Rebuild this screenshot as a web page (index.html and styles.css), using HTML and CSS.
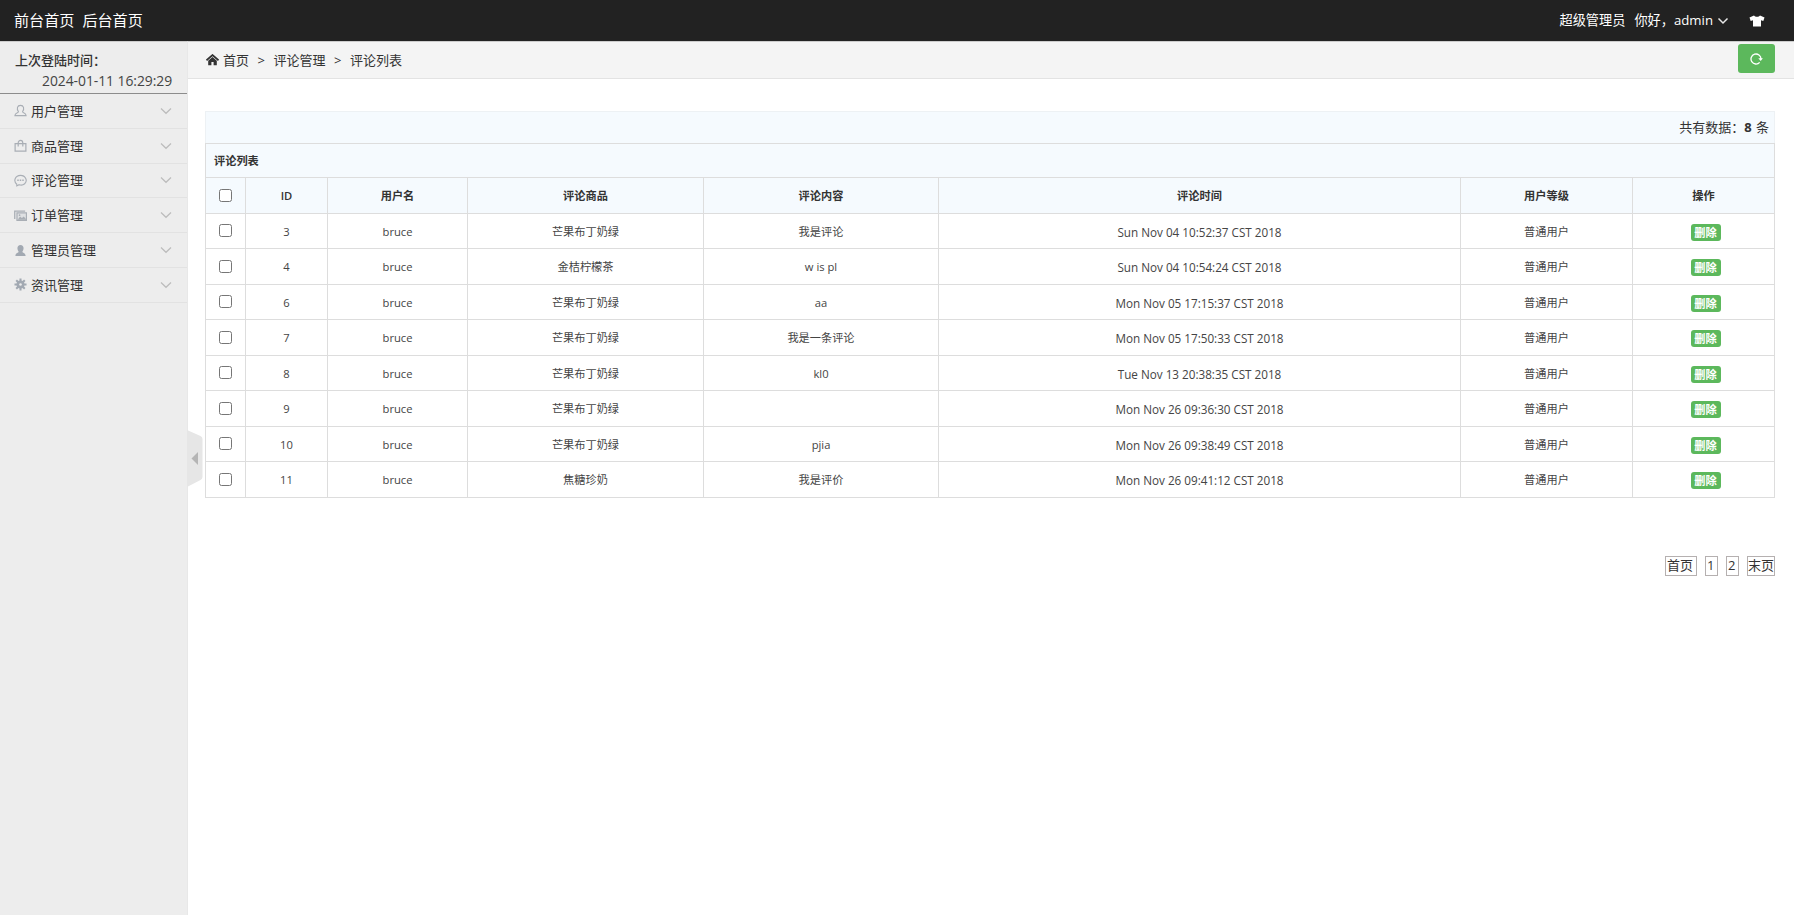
FILE: index.html
```html
<!DOCTYPE html>
<html lang="zh-CN">
<head>
<meta charset="utf-8">
<title>评论列表</title>
<link rel="stylesheet" href="styles.css">
</head>
<body>
<header class="topbar">
  <nav class="topbar-nav"><a>前台首页</a><a>后台首页</a></nav>
  <div class="topbar-user">
    <span class="role">超级管理员</span>
    <span class="hello">你好，admin</span>
    <svg class="caret" width="12" height="8" viewBox="0 0 12 8"><path d="M1.5 1.5 6 6l4.500-4.500" fill="none" stroke="#e8e8e8" stroke-width="1.500"/></svg>
    <svg class="shirt" width="16" height="12" viewBox="0 0 16 12"><path d="M5 .5C6 2.300 10 2.300 11 .5L15.500 2.500 14.300 6 12 5.300V11.500H4V5.300L1.700 6 .5 2.500Z" fill="#fff"/></svg>
  </div>
</header>
<div class="layout">
  <aside class="sidebar">
    <div class="login"><b>上次登陆时间：</b><span>2024-01-11 16:29:29</span></div>
    <ul class="menu">
      <li><svg class="mi" viewBox="0 0 14 14"><path d="M4.800 8.300C2.500 5 3.600 1.500 7 1.500s4.500 3.500 2.200 6.800c0 1.200 3.800 1 3.800 4.200H1c0-3.200 3.800-3 3.800-4.200Z" fill="none" stroke="#a9aeb5" stroke-width="1.200"/></svg><span>用户管理</span><svg class="chev" viewBox="0 0 12 8"><path d="M1 1.500 6 6.300l5-4.800"/></svg></li>
      <li><svg class="mi" viewBox="0 0 14 14"><path d="M1.200 5h11.600v8H1.200ZM4.500 8V4.500C4.500.500 9.500.500 9.500 4.500V8" fill="none" stroke="#a9aeb5" stroke-width="1.300"/></svg><span>商品管理</span><svg class="chev" viewBox="0 0 12 8"><path d="M1 1.500 6 6.300l5-4.800"/></svg></li>
      <li><svg class="mi" viewBox="0 0 14 14"><path d="M3 11C-1.200 7.500 1.500 1.500 7 1.500s8 5.800 4.500 9C9.800 12 7.500 12.200 5.500 11.500L3 12.800Z" fill="none" stroke="#a9aeb5" stroke-width="1.200"/><path d="M3.500 6h1.600v1.600H3.500ZM6.200 6h1.600v1.600H6.200ZM8.900 6h1.600v1.600H8.900Z" fill="#a9aeb5"/></svg><span>评论管理</span><svg class="chev" viewBox="0 0 12 8"><path d="M1 1.500 6 6.300l5-4.800"/></svg></li>
      <li><svg class="mi" viewBox="0 0 14 14"><path d="M.8 10.800V2.200H12" fill="none" stroke="#a9aeb5" stroke-width="1.400"/><path d="M3.200 4.200h10.200v8H3.200Z" fill="#dfe1e3" stroke="#a9aeb5" stroke-width="1.300"/><path d="M4 11.600 6.500 8l2 1.800L10.500 8l3 3.600Z" fill="#a9aeb5"/><circle cx="6" cy="6.600" r=".9" fill="#a9aeb5"/></svg><span>订单管理</span><svg class="chev" viewBox="0 0 12 8"><path d="M1 1.500 6 6.300l5-4.800"/></svg></li>
      <li><svg class="mi" viewBox="0 0 14 14"><path d="M5 8.300C2.600 5 3.600 1 7 1s4.400 4 2 7.300c0 1.200 3.500 1 3.500 4.700h-11C1.500 9.300 5 9.500 5 8.300Z" fill="#a2a9b2"/></svg><span>管理员管理</span><svg class="chev" viewBox="0 0 12 8"><path d="M1 1.500 6 6.300l5-4.800"/></svg></li>
      <li><svg class="mi" viewBox="0 0 14 14"><path d="M7 .5v13M.5 7h13M2.400 2.400l9.200 9.200M11.600 2.400l-9.200 9.200" stroke="#a2a9b2" stroke-width="2.200"/><circle cx="7" cy="7" r="4.300" fill="#a2a9b2"/><circle cx="7" cy="7" r="1.400" fill="#ededed"/></svg><span>资讯管理</span><svg class="chev" viewBox="0 0 12 8"><path d="M1 1.500 6 6.300l5-4.800"/></svg></li>
    </ul>
    <svg class="fold" width="16" height="57" viewBox="0 0 16 57"><path d="M0 0 13.500 6Q15.500 7 15.500 9V47Q15.500 49 13.500 50L0 57Z" fill="#e6e6e6"/><path d="M4.500 28.500 11 22v13Z" fill="#b5b5b5"/></svg>
  </aside>
  <main class="main">
    <nav class="crumbs">
      <svg width="13" height="12" viewBox="0 0 13 12"><path d="M.5 6.300 6.500 1l6 5.300" fill="none" stroke="#333" stroke-width="1.700"/><path d="M2.200 6.800 6.500 3l4.300 3.800V11.300H7.600V8H5.400v3.300H2.200Z" fill="#333"/></svg>
      <span>首页</span><i>&gt;</i><span>评论管理</span><i>&gt;</i><span>评论列表</span>
      <a class="refresh"><svg width="13" height="12" viewBox="0 0 13 12"><path d="M9.700 9.400A5 5 0 1 1 11 6" fill="none" stroke="#fff" stroke-width="1.300"/><path d="M8.300 5.200h4.600L10.700 8Z" fill="#fff"/></svg></a>
    </nav>
    <section class="content">
      <div class="count">共有数据：<strong>8</strong> 条</div>
      <table class="grid">
        <colgroup><col class="c1"><col class="c2"><col class="c3"><col class="c4"><col class="c5"><col class="c6"><col class="c7"><col class="c8"></colgroup>
        <thead>
          <tr class="caption"><th colspan="8">评论列表</th></tr>
          <tr><th><i class="box"></i></th><th>ID</th><th>用户名</th><th>评论商品</th><th>评论内容</th><th>评论时间</th><th>用户等级</th><th>操作</th></tr>
        </thead>
        <tbody>
          <tr><td><i class="box"></i></td><td>3</td><td>bruce</td><td>芒果布丁奶绿</td><td>我是评论</td><td class="time">Sun Nov 04 10:52:37 CST 2018</td><td>普通用户</td><td><a class="del">删除</a></td></tr>
          <tr><td><i class="box"></i></td><td>4</td><td>bruce</td><td>金桔柠檬茶</td><td>w is pl</td><td class="time">Sun Nov 04 10:54:24 CST 2018</td><td>普通用户</td><td><a class="del">删除</a></td></tr>
          <tr><td><i class="box"></i></td><td>6</td><td>bruce</td><td>芒果布丁奶绿</td><td>aa</td><td class="time">Mon Nov 05 17:15:37 CST 2018</td><td>普通用户</td><td><a class="del">删除</a></td></tr>
          <tr><td><i class="box"></i></td><td>7</td><td>bruce</td><td>芒果布丁奶绿</td><td>我是一条评论</td><td class="time">Mon Nov 05 17:50:33 CST 2018</td><td>普通用户</td><td><a class="del">删除</a></td></tr>
          <tr><td><i class="box"></i></td><td>8</td><td>bruce</td><td>芒果布丁奶绿</td><td>kl0</td><td class="time">Tue Nov 13 20:38:35 CST 2018</td><td>普通用户</td><td><a class="del">删除</a></td></tr>
          <tr><td><i class="box"></i></td><td>9</td><td>bruce</td><td>芒果布丁奶绿</td><td></td><td class="time">Mon Nov 26 09:36:30 CST 2018</td><td>普通用户</td><td><a class="del">删除</a></td></tr>
          <tr><td><i class="box"></i></td><td>10</td><td>bruce</td><td>芒果布丁奶绿</td><td>pjia</td><td class="time">Mon Nov 26 09:38:49 CST 2018</td><td>普通用户</td><td><a class="del">删除</a></td></tr>
          <tr><td><i class="box"></i></td><td>11</td><td>bruce</td><td>焦糖珍奶</td><td>我是评价</td><td class="time">Mon Nov 26 09:41:12 CST 2018</td><td>普通用户</td><td><a class="del">删除</a></td></tr>
        </tbody>
      </table>
      <div class="pager"><a class="first">首页</a><a>1</a><a>2</a><a class="last">末页</a></div>
    </section>
  </main>
</div>
</body>
</html>
```
FILE: styles.css
```css
* { box-sizing: border-box; }
body {
  margin: 0;
  height: 915px;
  display: flex;
  flex-direction: column;
  overflow: hidden;
  background: #fff;
  color: #333;
  font: 13px/20px "Open Sans", "Noto Sans CJK SC", sans-serif;
}
i { font-style: normal; }
svg { display: block; flex: none; }

.topbar {
  height: 41px;
  flex: none;
  display: flex;
  justify-content: space-between;
  align-items: center;
  padding: 0 26px 0 14px;
  background: #222;
  color: #fff;
}
.topbar-nav { display: flex; gap: 8px; margin-top: -1px; font-size: 15.100px; }
.topbar-user { display: flex; align-items: center; }
.role { margin: -2px 9px 0 0; font-size: 13.200px; }
.hello { margin: -2px 4px 0 0; font-size: 13.200px; }
.shirt { margin: 0 3px 0 20px; }

.layout { flex: 1; display: flex; min-height: 0; }
.sidebar {
  position: relative;
  width: 188px;
  flex: none;
  background: #ededed;
  border-right: 1px solid #e8e8e8;
  border-top: 1px solid #ccc;
}
.login {
  height: 52px;
  padding: 9px 0 0 15px;
  display: flex;
  flex-direction: column;
  border-bottom: 1px solid #8c8c8c;
}
.login b { font-weight: 500; line-height: 19px; }
.login span { padding-left: 27px; line-height: 21px; font-size: 13.900px; letter-spacing: -.05px; color: #444; }
.menu { margin: 0; padding: 0; list-style: none; }
.menu li {
  height: 34.8px;
  display: flex;
  align-items: center;
  padding: 0 15px 0 14px;
  border-bottom: 1px solid #e2e2e2;
}
.mi { width: 13px; height: 13px; margin-right: 4px; }
.chev { width: 12px; height: 8px; margin-left: auto; }
.chev path { fill: none; stroke: #bcbcbc; stroke-width: 1.200; }
.fold { position: absolute; left: 187px; top: 388px; }

.main { flex: 1; min-width: 0; }
.crumbs {
  height: 38px;
  display: flex;
  align-items: center;
  padding: 0 19px 0 18px;
  background: #f4f4f4;
  border-top: 1px solid #ccc;
  border-bottom: 1px solid #e3e3e3;
}
.crumbs span, .crumbs i { margin-top: -1px; }
.crumbs span:first-of-type { margin-left: 4px; }
.crumbs i { margin-left: 8.500px; margin-right: 8.500px; }
.refresh {
  width: 37px;
  height: 29px;
  margin: 0 0 3px auto;
  border-radius: 3px;
  background: #5cb85c;
  display: flex;
  align-items: center;
  justify-content: center;
}

.content { padding: 32px 19px 0 17px; }
.count {
  height: 32px;
  padding: 0 5px 0 0;
  line-height: 30px;
  text-align: right;
  word-spacing: 1px;
  background: #f5fafe;
  border: 1px solid #edf1f4;
  border-bottom: 0;
}
.grid {
  width: 1570px;
  table-layout: fixed;
  border-collapse: separate;
  border-spacing: 0;
  border-top: 1px solid #ddd;
  font-size: 11.200px;
  line-height: 16px;
}
.c1 { width: 41px; }
.c2 { width: 82px; }
.c3 { width: 140px; }
.c4 { width: 236px; }
.c5 { width: 235px; }
.c6 { width: 522px; }
.c7 { width: 172px; }
.c8 { width: 142px; }
.grid th, .grid td {
  padding: 0;
  text-align: center;
  vertical-align: middle;
  border-right: 1px solid #ddd;
  border-bottom: 1px solid #ddd;
  white-space: nowrap;
}
.grid th:first-child, .grid td:first-child { border-left: 1px solid #ddd; }
.grid th { height: 36px; background: #f5fafe; font-weight: 600; }
.grid .caption th { height: 34px; text-align: left; padding-left: 8px; }
.grid td { height: 36px; padding-top: 1px; color: #444; }
.grid tr:nth-child(odd) td { height: 35px; }
.grid td:first-child { padding-top: 0; }
.grid td.time { font-size: 11.700px; }
.box {
  display: block;
  width: 13px;
  height: 13px;
  margin: 0 auto;
  border: 1px solid #767676;
  border-radius: 2.500px;
  background: #fff;
}
.grid td .box { margin-top: -1px; }
.del {
  display: block;
  width: 30px;
  height: 17px;
  margin: 1px auto 0;
  position: relative;
  left: 2px;
  border-radius: 3px;
  background: #5cb85c;
  color: #fff;
  font-weight: 700;
  line-height: 17px;
}
.pager { display: flex; justify-content: flex-end; gap: 8px; margin-top: 58px; }
.pager a {
  width: 13px;
  height: 20px;
  padding-left: 1px;
  border: 1px solid #b5b0b0;
  line-height: 17px;
  white-space: nowrap;
}
.pager .first { width: 32px; }
.pager .last { width: 28px; padding-left: 0; }
```
